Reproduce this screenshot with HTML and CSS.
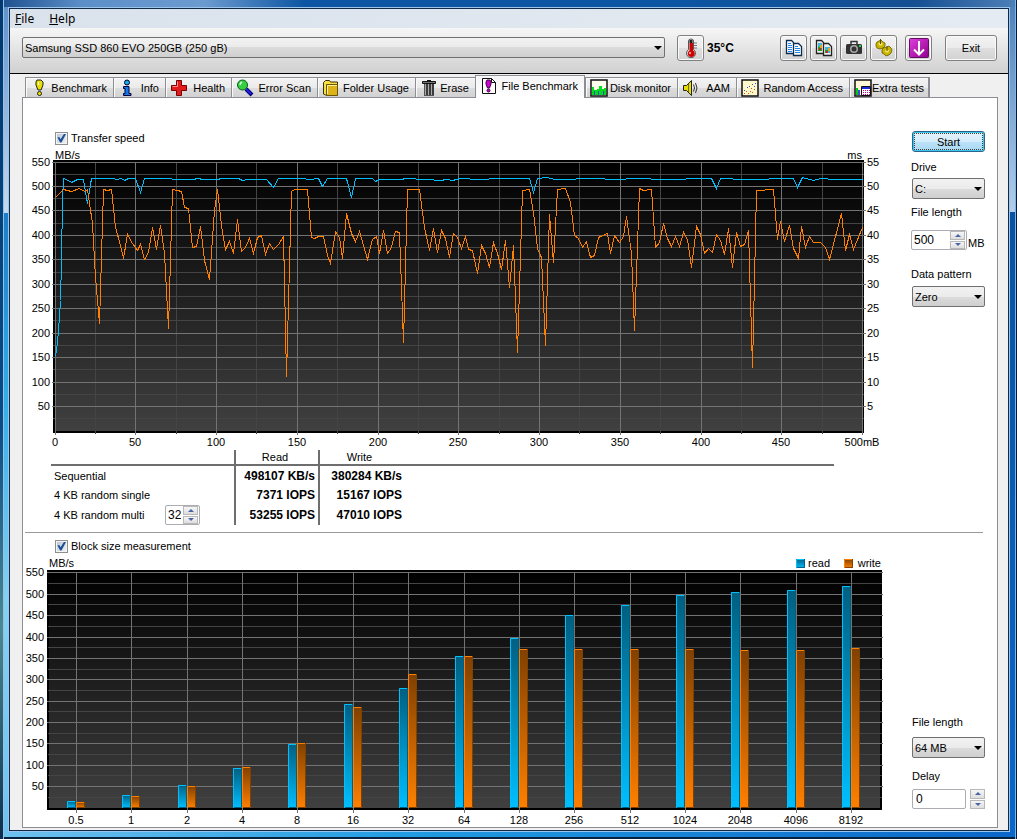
FILE: index.html
```html
<!DOCTYPE html>
<html lang="en">
<head>
<meta charset="utf-8">
<title>File Benchmark</title>
<link rel="stylesheet" href="styles.css">
</head>
<body>
<div class="desktop">
<div class="window">
  <nav class="menu">
    <button type="button"><u>F</u>ile</button>
    <button type="button"><u>H</u>elp</button>
  </nav>

  <header class="toolbar">
    <div class="combo combo-wide">
      <select aria-label="Disk"><option>Samsung SSD 860 EVO 250GB (250 gB)</option></select>
    </div>
    <button type="button" class="tool tool-temp" aria-label="Temperature">
      <svg viewBox="0 0 20 20"><path d="M7.500 3q0-2 2.500-2t2.500 2v8.500a4.500 4.500 0 1 1-5 0z" fill="#ddd" stroke="#555"/><path d="M8.500 5h3.500v7.500a3.500 3.500 0 1 1-3.500 0z" fill="#d40000"/><path d="M8.500 2h3v3h-3z" fill="#222"/><path d="M13 5h3M13 7.500h3M13 10h3" stroke="#777"/><circle cx="9" cy="15" r="1.200" fill="#ff9a9a"/></svg>
    </button>
    <output class="temp">35°C</output>
    <div class="tools">
      <button type="button" class="tool" aria-label="Copy text">
        <svg viewBox="0 0 20 20"><path d="M2.500 2.500h5l2 2v11h-7zM9.500 5.500h5l3 3v9h-8z" fill="#fff" stroke="#0d2b4c" stroke-width="1.300"/><path d="M4 5.500h3M4 7.500h4M4 9.500h4M4 11.500h4M4 13.500h4M11 8.500h3M11 10.500h5M11 12.500h5M11 14.500h5" stroke="#1d86e8"/></svg>
      </button>
      <button type="button" class="tool" aria-label="Copy picture">
        <svg viewBox="0 0 20 20"><path d="M2.500 2.500h5l2 2v11h-7zM9.500 5.500h5l3 3v9h-8z" fill="#eee" stroke="#222" stroke-width="1.300"/><path d="M4 5h4v4H4zM11 9h5v6h-5z" fill="#3db8d4"/><path d="M4 9h4v4H4zM11 12h3v3h-3z" fill="#2b9a35"/><path d="M6 7h2v3H6zM14 10h2v3h-2z" fill="#e8a020"/><path d="M5 10h2v2H5zM12 13h2v2h-2z" fill="#c32a1c"/></svg>
      </button>
      <button type="button" class="tool" aria-label="Save screenshot">
        <svg viewBox="0 0 20 20"><path d="M7 6V3.500h6V6" fill="none" stroke="#333" stroke-width="1.500"/><rect x="2" y="6" width="16" height="10" rx="1.500" fill="#333"/><circle cx="10" cy="11" r="4" fill="#aaa"/><circle cx="10" cy="11" r="2.500" fill="#333"/><path d="M15 7h2v2h-2z" fill="#24d63b"/></svg>
      </button>
      <button type="button" class="tool" aria-label="Options">
        <svg viewBox="0 0 20 20"><g fill="#c9b400" stroke="#665a00" stroke-width=".8"><path d="M2 6l1-2 2-1 2-1 2 2 2 1v3l-2 2-3 1-3-1-1-2z"/><path d="M8 12l1-2 4-1 2-1 2 2 1 2-1 3-2 2-3 1-2-2-2-1z"/></g><ellipse cx="6.500" cy="6" rx="2" ry="1.500" fill="#f0e870"/><ellipse cx="13" cy="13" rx="2" ry="1.500" fill="#f0e870"/><path d="M6.500 1v5M13 8v5" stroke="#554b00"/></svg>
      </button>
    </div>
    <button type="button" class="tool tool-down" aria-label="Minimize to tray">
      <svg viewBox="0 0 20 20"><defs><linearGradient id="violet" x2="1" y2="1"><stop stop-color="#e040e0"/><stop offset="1" stop-color="#90008c"/></linearGradient></defs><rect x=".5" y=".5" width="19" height="19" rx="1" fill="url(#violet)" stroke="#60105e"/><path d="M10 3v13M5 11.500l5 5 5-5" fill="none" stroke="#fff" stroke-width="2"/></svg>
    </button>
    <button type="button" class="exit">Exit</button>
  </header>

  <div class="tabs" role="tablist">
    <button type="button" role="tab"><svg viewBox="0 0 18 18"><path d="M7 1h4l2 2v3l-2 5H8L6 6V3z" fill="#e8e000" stroke="#222"/><path d="M8 3h1v3H8z" fill="#fff"/><circle cx="9.500" cy="14.500" r="2" fill="#e8e000" stroke="#222"/></svg>Benchmark</button>
    <button type="button" role="tab"><svg viewBox="0 0 18 18"><circle cx="9" cy="3.500" r="2.500" fill="#19a8e8" stroke="#003"/><path d="M5.500 7.500H11v7h2v2H5.500v-2H7v-5H5.500z" fill="#1277ea" stroke="#003"/></svg>Info</button>
    <button type="button" role="tab"><svg viewBox="0 0 18 18"><path d="M6.500 1.500h5v5h5v5h-5v5h-5v-5h-5v-5h5z" fill="#e21c1c" stroke="#700"/><path d="M7.500 2.500v5h-5" fill="none" stroke="#ff8c8c"/></svg>Health</button>
    <button type="button" role="tab"><svg viewBox="0 0 18 18"><path d="M10 10l6 6" stroke="#000078" stroke-width="4"/><path d="M10 10l5 5" stroke="#2222e0" stroke-width="2"/><circle cx="6.500" cy="6" r="5" fill="#35cf43" stroke="#075b10"/><path d="M4 6q0-2 2-3" stroke="#d5ffd5" stroke-width="1.500" fill="none"/></svg>Error Scan</button>
    <button type="button" role="tab"><svg viewBox="0 0 18 18"><path d="M1.500 3.500l2-2h4l1 1.500h7v13h-12l-2-1z" fill="#f4df45" stroke="#3b3000"/><path d="M4.500 5.500h11v11h-11z" fill="#dcb419" stroke="#6b5500"/><path d="M5.500 15V6.500H15" stroke="#fff19a" fill="none"/></svg>Folder Usage</button>
    <button type="button" role="tab"><svg viewBox="0 0 18 18"><path d="M4 4h10v13H4z" fill="#555"/><path d="M5.500 5v11M8.500 5v11M11.500 5v11" stroke="#aaa"/><path d="M7 5v11M10 5v11M13 5v11" stroke="#222"/><path d="M2.500 2.500h13v2h-13z" fill="#777" stroke="#111"/><path d="M7 1.500h4" stroke="#111"/></svg>Erase</button>
    <button type="button" role="tab" aria-selected="true"><svg viewBox="0 0 18 18"><path d="M2.500 1.500h9l4 4v11h-13z" fill="#fff" stroke="#111"/><path d="M11.500 1.500v4h4" fill="none" stroke="#111"/><path d="M7 3h3l1 2v2l-1.500 4h-2L6 7V5z" fill="#d000d0" stroke="#400040"/><circle cx="8.500" cy="13.500" r="1.500" fill="#d000d0" stroke="#400040"/></svg>File Benchmark</button>
    <button type="button" role="tab"><svg viewBox="0 0 18 18"><path d="M1 1h16v16H1z" fill="#fffff0" stroke="#111" stroke-width="1.500"/><path d="M2 8h2v3h3v-1h2V7h3v3h2v-1h2v7H2z" fill="#00df1a"/><path d="M4 12h1v4H4zM8 12h1v4H8zM13 12h1v4h-1z" fill="#3b47d8"/></svg>Disk monitor</button>
    <button type="button" role="tab"><svg viewBox="0 0 18 18"><path d="M1.500 6.500h3l5-5v15l-5-5h-3z" fill="#e6dc00" stroke="#222"/><path d="M6.500 5v8" stroke="#776d00"/><path d="M11.500 5.500q2 3.500 0 7M13.500 4q3 5 0 10" fill="none" stroke="#333"/></svg>AAM</button>
    <button type="button" role="tab"><svg viewBox="0 0 18 18"><path d="M1 1h16v16H1z" fill="#fff8cb" stroke="#111" stroke-width="1.500"/><g fill="#3b47d8"><path d="M3 11h1v1H3zM6 8h1v1H6zM8 7h1v1H8zM11 5h1v1h-1zM13 7h1v1h-1zM14 4h1v1h-1z"/></g><g fill="#e34b18"><path d="M3 14h1v1H3zM5 12h1v1H5zM7 14h1v1H7zM9 12h1v1H9zM11 13h1v1h-1zM13 10h1v1h-1zM10 9h1v1h-1z"/></g></svg>Random Access</button>
    <button type="button" role="tab"><svg viewBox="0 0 18 18"><path d="M1 1h16v16H1z" fill="#fff8d8" stroke="#111" stroke-width="1.500"/><path d="M2 9h2v7H2z" fill="#00c818"/><path d="M4 11h2v5H4z" fill="#3b47d8"/><path d="M7.500 7.500h9v9h-9z" fill="#fff" stroke="#111"/><path d="M8 8h8v2H8z" fill="#1a2ad8"/><path d="M9 11.500h7M9 13.500h7M9 15.500h7" stroke="#c800a0" stroke-dasharray="1 1"/></svg>Extra tests</button>
  </div>

  <main class="panel">
    <section class="part">
      <div class="part-main">
        <label class="check"><input type="checkbox" checked>Transfer speed</label>
        <svg id="speed" class="chart" viewBox="23 148 885 300" role="img" aria-label="Transfer speed"></svg>
        <table class="results">
          <colgroup><col class="col-name"><col class="col-value"><col class="col-value"><col></colgroup>
          <thead><tr><th></th><th scope="col">Read</th><th scope="col">Write</th><th></th></tr></thead>
          <tbody>
            <tr><th scope="row">Sequential</th><td>498107 KB/s</td><td>380284 KB/s</td><td></td></tr>
            <tr><th scope="row">4 KB random single</th><td>7371 IOPS</td><td>15167 IOPS</td><td></td></tr>
            <tr><th scope="row"><div class="multi"><label for="queue">4 KB random multi</label>
              <span class="spin spin-small"><input id="queue" type="text" value="32"><span class="arrows"><button type="button" aria-label="More"></button><button type="button" aria-label="Less"></button></span></span></div></th>
              <td>53255 IOPS</td><td>47010 IOPS</td><td></td></tr>
          </tbody>
        </table>
      </div>
      <aside class="side">
        <button type="button" class="start">Start</button>
        <label for="drive">Drive</label>
        <div class="combo"><select id="drive"><option>C:</option></select></div>
        <label for="length">File length</label>
        <div class="unit">
          <span class="spin"><input id="length" type="text" value="500"><span class="arrows"><button type="button" aria-label="More"></button><button type="button" aria-label="Less"></button></span></span>
          <span>MB</span>
        </div>
        <label for="pattern">Data pattern</label>
        <div class="combo"><select id="pattern"><option>Zero</option></select></div>
      </aside>
    </section>
    <hr>
    <section class="part part-block">
      <div class="part-main">
        <label class="check"><input type="checkbox" checked>Block size measurement</label>
        <svg id="blocks" class="chart" viewBox="23 554 885 273" role="img" aria-label="Block size measurement"></svg>
      </div>
      <aside class="side side-end">
        <label for="block-length">File length</label>
        <div class="combo"><select id="block-length"><option>64 MB</option></select></div>
        <label for="delay">Delay</label>
        <div class="delay">
          <input id="delay" type="text" value="0">
          <span class="arrows"><button type="button" aria-label="More"></button><button type="button" aria-label="Less"></button></span>
        </div>
      </aside>
    </section>
  </main>
</div>
</div>
<script src="charts.js"></script>
</body>
</html>
```
FILE: styles.css
```css
* { box-sizing: border-box; }

body {
  margin: 0;
  font: 11px/14px "Liberation Sans", Arial, sans-serif;
  color: #000;
}

button, input, select { font: inherit; color: inherit; margin: 0; }

.desktop {
  min-height: 100vh;
  display: flex;
  padding: 7px 7px 7px 8px;
  background:
    linear-gradient(#04386e, #0a4a86 50%, #4c8890 75%, #0c2f50) 0 0 / 3px 100% no-repeat,
    linear-gradient(#8fc4ea, #8fc4ea) 3px 0 / 1px 100% no-repeat,
    linear-gradient(#061a34, #061a34) 100% 0 / 1px 100% no-repeat,
    linear-gradient(#7ab8ec, #7ab8ec) calc(100% - 1px) 0 / 1px 100% no-repeat,
    linear-gradient(#06213c, #06213c) 0 100% / 100% 2px no-repeat,
    linear-gradient(90deg, #6fc2ee, #219be2 40%, #0a66c8) 0 100% / 100% 7px no-repeat,
    linear-gradient(90deg, #1c4f8c, #5c8fc8 8%, #6c9bd0 20%, #0c55a2 30%, #0c55a2 68%, #164f92 90%, #4d80b8) 0 0 / 100% 7px no-repeat,
    linear-gradient(#5c8fcb, #c4d9ee 213px, #1b7cc8 213px, #32aee6 400px, #86d0f2 600px, #6fc2ee) 0 0 / 50% 100% no-repeat,
    linear-gradient(#4d80b8, #b4cde8 212px, #0a52a0 212px, #0a66c8) 100% 0 / 50% 100% no-repeat;
}

.window {
  flex: 1;
  min-width: 0;
  display: flex;
  flex-direction: column;
  border: 2px solid #0e2b4c;
  background: #f0f0f0;
  outline: 1px solid #9cc4ea;
  outline-offset: -1px;
}

.menu {
  display: flex;
  height: 19px;
  padding: 0 5px;
  gap: 15px;
  background: linear-gradient(90deg, #dae2ec, #e4ebf2);
  font: 12px/20px "Noto Sans", "Open Sans", sans-serif;
}
.menu button { border: 0; padding: 0; background: none; }

.toolbar {
  display: flex;
  align-items: flex-start;
  height: 46px;
  padding: 7px 11px 0 12px;
  border-bottom: 1px solid #000;
  background: linear-gradient(#f6f6f6, #d0d0d0);
}

.combo { display: grid; align-items: center; height: 21px; }
.combo-wide { flex: 1; margin: 2px 12px 0 0; }
.combo select, .combo::after { grid-area: 1 / 1; }
.combo select {
  appearance: none;
  width: 100%;
  height: 21px;
  padding: 0 2px;
  border: 1px solid #707070;
  border-radius: 2px;
  background: linear-gradient(#f2f2f2, #ebebeb 50%, #dcdcdc 50%, #cfcfcf);
}
.combo::after {
  content: "";
  justify-self: end;
  margin-right: 3px;
  border: 4px solid transparent;
  border-top-color: #000;
  border-bottom: 0;
  pointer-events: none;
}

.tool, .exit {
  display: grid;
  place-items: center;
  width: 27px;
  height: 26px;
  padding: 0;
  border: 1px solid #808080;
  border-radius: 3px;
  background: linear-gradient(#f3f3f3, #ebebeb 50%, #dfdfdf 50%, #d2d2d2);
  box-shadow: inset 0 0 0 1px #fafafa;
}
.tool svg { width: 20px; height: 20px; }
.exit { width: 52px; }
.temp { width: 76px; padding: 0 3px; font-size: 12px; font-weight: bold; line-height: 27px; }
.tools { display: flex; gap: 3px; margin-right: 8px; }
.tool-down { margin-right: 13px; }

.tabs {
  display: grid;
  grid-template-columns: 88px 52px 66px 86px 98px 60px 110px 92px 59px 113px 81px;
  align-items: end;
  height: 24px;
  margin-bottom: -1px;
  padding-left: 15px;
  position: relative;
}
.tabs button {
  display: flex;
  align-items: center;
  justify-content: space-between;
  height: 21px;
  padding: 0 6px 0 4px;
  border: 1px solid #8c8e94;
  border-right-width: 0;
  background: linear-gradient(#f3f3f3, #ebebeb 50%, #dddddd 50%, #d2d2d2);
  box-shadow: inset 1px 1px #fafafa;
  white-space: nowrap;
}
.tabs button:last-child { border-right-width: 2px; padding-right: 4px; }
.tabs svg { flex: none; width: 18px; height: 18px; }
.tabs button[aria-selected] {
  height: 23px;
  border-right-width: 1px;
  border-bottom: 0;
  padding-bottom: 2px;
  background: linear-gradient(#f4f4f4, #fff);
}

.panel {
  flex: 1;
  display: flex;
  flex-direction: column;
  margin: 0 10px 2px 12px;
  border: 1px solid #8c8e94;
  background: #fff;
}
.panel hr { width: 100%; height: 1px; margin: 0; border: 0; border-left: 2px solid #fff; border-right: 14px solid #fff; background: #999; }

.part {
  display: grid;
  grid-template-columns: 1fr 74px;
  column-gap: 3px;
  padding: 33px 12px 7px 0;
}
.part-block { flex: 1; padding: 6px 12px 0 0; }
.part-main { min-width: 0; }

.check { display: flex; align-items: center; gap: 3px; height: 14px; margin-left: 32px; }
.check input {
  appearance: none;
  display: grid;
  place-items: center;
  width: 13px;
  height: 13px;
  border: 1px solid #8e8f8f;
  background: linear-gradient(135deg, #b8c2cc, #f4f6f8);
  box-shadow: inset 0 0 0 1px #f4f4f4;
}
.check input::before {
  content: "";
  width: 9px;
  height: 9px;
  background: #1c4f94;
  clip-path: polygon(5% 45%, 25% 40%, 40% 65%, 80% 0, 100% 5%, 50% 100%, 35% 100%);
}

.chart { display: block; width: 100%; height: auto; margin-top: 3px; font-size: 11px; }
.part-block .chart { margin-top: 0; }
.end { text-anchor: end; }
.mid { text-anchor: middle; }
.major { stroke: #737373; shape-rendering: crispEdges; }
.minor { stroke: #444; shape-rendering: crispEdges; }
.line-read, .line-write { fill: none; shape-rendering: crispEdges; }
.line-read { stroke: #00bfff; }
.line-write { stroke: #ff8000; }

.results {
  width: calc(100% - 102px);
  margin-left: 28px;
  margin-top: 2px;
  table-layout: fixed;
  border-collapse: collapse;
}
.col-name { width: 184px; }
.col-value { width: 84px; }
.results th, .results td { padding: 0 3px 0 0; font-weight: normal; text-align: right; white-space: nowrap; }
.results th { padding: 0 4px 0 0; text-align: center; }
.results tbody th { padding: 0 0 0 3px; text-align: left; }
.results thead tr { height: 15px; border-bottom: 2px solid #6e6e6e; }
.results tbody tr { height: 20px; }
.results td { font-size: 12px; font-weight: bold; }
.results tr > :nth-child(2), .results tr > :nth-child(3) { border-left: 2px solid #6e6e6e; }
.results tr > td:nth-child(3) { padding-right: 1px; }
.multi { display: flex; align-items: center; justify-content: space-between; padding-right: 34px; height: 20px; }

.spin { display: flex; width: 56px; height: 20px; padding-right: 1px; border: 1px solid #abadb3; border-radius: 2px; background: #fff; }
.spin-small { width: 35px; }
.spin input { flex: 1; width: 0; min-width: 0; padding: 0 2px; border: 0; background: none; font-size: 12px; }
.arrows { display: flex; flex-direction: column; width: 15px; gap: 1px; }
.arrows button { flex: 1; display: grid; place-items: center; min-height: 0; padding: 0; border: 1px solid #b8b8b8; background: linear-gradient(#f6f6f6, #dedede); }
.arrows button::before { content: ""; border: 3px solid transparent; border-top: 0; border-bottom-color: #4a62a8; }
.arrows button:last-child::before { border: 3px solid transparent; border-bottom: 0; border-top-color: #4a62a8; }

.side { display: flex; flex-direction: column; align-items: stretch; padding-left: 1px; }
.side > label, .unit { margin-left: -1px; }
.start {
  height: 21px;
  margin-bottom: 8px;
  padding: 0;
  border: 1px solid #2c628b;
  border-radius: 3px;
  background: linear-gradient(#e4f3fc, #d4ecfb 50%, #bce3f9 50%, #a8d8f3);
  box-shadow: inset 0 0 0 1px #38c8f0;
  outline: 1px dotted #4a3a30;
  outline-offset: -3px;
}
.side label { margin-bottom: 4px; }
.side .combo { margin-bottom: 6px; }
.unit { display: flex; align-items: flex-end; gap: 1px; margin-top: 7px; margin-bottom: 17px; }
.unit > span:last-child { line-height: 13px; }
.side label[for="pattern"] { margin-bottom: 5px; }
.side-end { justify-content: flex-end; padding-bottom: 18px; }
.side-end > label { margin-left: 0; }
.side-end label { margin-bottom: 8px; }
.side-end .combo { margin-bottom: 11px; }
.side-end label[for="delay"] { margin-bottom: 6px; }
.delay { display: flex; justify-content: space-between; gap: 4px; }
.delay input { flex: 1; width: 0; height: 20px; padding: 0 3px; border: 1px solid #abadb3; border-radius: 2px; font-size: 12px; }
```
FILE: charts.js
```js
const gradient = (id, from, to) =>
  `<linearGradient id="${id}" x2="0" y2="1"><stop stop-color="${from}"/><stop offset="1" stop-color="${to}"/></linearGradient>`;
const text = (x, y, label, cls = "") => `<text x="${x}" y="${y}" class="${cls}">${label}</text>`;
const hline = (x1, x2, y, cls) => `<path class="${cls}" d="M${x1} ${y + 0.5}H${x2}"/>`;
const vline = (x, y1, y2, cls) => `<path class="${cls}" d="M${x + 0.5} ${y1}V${y2}"/>`;

const read = "55,356 57,342 58,330 60,300 61,260 62,200 63,178 66,179 71,182 77,179 83,179 87,203 91,178 113,178 116,179 121,178 124,180 128,178 135,178 140,192 144,178 170,178 173,179 193,179 197,178 203,179 218,179 220,178 238,178 242,180 247,179 266,179 273,187 278,178 300,178 310,179 318,178 322,186 327,178 346,178 351,197 355,178 372,178 375,181 379,179 402,179 404,178 426,179 440,180 446,179 452,180 460,178 478,179 500,178 529,178 533,192 537,178 546,177 555,179 597,178 612,179 640,178 660,179 711,178 716,188 720,178 745,179 793,178 797,187 802,177 813,180 820,178 835,179 862,179";
const write = "55,197 63,189 71,191 79,188 84,191 87,189 88,196 92,223 95,277 99,323 103,189 107,190 111,189 115,227 120,245 123,258 127,234 132,243 137,250 140,244 144,259 148,252 152,227 156,249 160,225 164,253 168,328 172,189 177,190 181,191 184,207 188,208 192,247 196,246 200,226 204,260 209,279 214,210 217,189 221,225 225,249 229,241 233,253 237,219 241,251 245,247 249,238 253,253 257,237 261,235 265,254 269,243 273,249 278,244 283,236 286,376 291,191 294,189 307,189 311,237 314,238 318,236 323,236 327,255 330,263 335,231 339,237 342,258 346,213 351,233 355,241 359,231 367,259 372,239 376,236 379,253 383,230 387,253 391,247 395,231 399,232 403,342 407,189 419,189 424,227 429,250 433,228 437,252 441,230 445,238 449,257 453,233 457,237 461,248 465,236 468,249 472,250 477,273 481,245 485,253 489,267 493,242 497,253 501,269 505,240 509,287 513,245 517,352 522,190 529,189 533,212 537,248 541,257 545,345 549,214 553,262 557,189 565,188 570,202 574,235 578,238 582,247 586,241 590,257 594,255 598,237 607,233 610,253 614,235 619,242 623,236 626,216 631,253 634,330 639,188 643,190 651,189 655,247 659,242 663,223 667,238 671,246 675,236 679,246 683,232 687,239 691,267 696,226 700,234 704,253 708,248 712,252 716,234 720,240 724,254 728,228 732,267 736,232 740,246 744,244 748,230 752,367 756,190 773,189 777,239 780,221 784,241 789,225 793,248 798,258 801,226 805,247 809,236 813,242 820,242 825,247 829,259 841,213 845,250 849,234 853,249 862,227";

function drawSpeed() {
  const y = v => Math.floor(431 - v * 0.489);
  const x = v => Math.floor(55 + v * 1.615);
  let out = `<defs>${gradient("shade", "#000", "#404040")}</defs>
    <path d="M53 160H864V433H53z"/><path fill="url(#shade)" d="M55 162H863V431H55z"/>`;
  for (let v = 25; v < 550; v += 50) out += hline(53, 864, y(v), "minor");
  for (let v = 25; v < 500; v += 50) out += vline(x(v), 162, 434, "minor");
  for (let v = 50; v <= 550; v += 50) {
    out += hline(52, 866, y(v), "major") + text(50, y(v) + 4, v, "end") + text(867, y(v) + 4, v / 10);
  }
  for (let v = 0; v <= 500; v += 50) {
    out += vline(x(v), 162, 435, "major") + text(x(v), 446, v === 500 ? "500mB" : v, "mid");
  }
  out += text(55, 159, "MB/s") + text(862, 159, "ms", "end");
  out += `<g transform="translate(0.5 0.5)"><polyline class="line-read" points="${read}"/><polyline class="line-write" points="${write}"/></g>`;
  document.getElementById("speed").innerHTML = out;
}

function drawBlocks() {
  const sizes = ["0.5", 1, 2, 4, 8, 16, 32, 64, 128, 256, 512, 1024, 2048, 4096, 8192];
  const tops = [
    [802, 803], [796, 797], [786, 787], [769, 768], [745, 744], [705, 708], [689, 675], [657, 657],
    [639, 650], [616, 650], [606, 650], [596, 650], [593, 651], [591, 651], [587, 649]
  ];
  const y = v => Math.round(808.5 - v * 0.4275);
  let out = `<defs>${gradient("cyan", "#005f80", "#00bfff")}${gradient("amber", "#804000", "#ff8000")}</defs>
    <path d="M47 571H882V811H47z"/><path fill="url(#shade)" d="M49 573H880V809H49z"/>`;
  const bar = (left, top, width, bottom, fill, light, dark) =>
    `<path fill="${fill}" d="M${left} ${top}h${width}V${bottom}h-${width}z"/>
     <path fill="none" stroke="${dark}" d="M${left + width - 0.5} ${top}V${bottom - 0.5}H${left}"/>
     <path fill="none" stroke="${light}" d="M${left + 0.5} ${bottom}V${top + 0.5}H${left + width - 1}"/>`;
  const blue = ["url(#cyan)", "#00bfff", "#005f80"];
  const orange = ["url(#amber)", "#ff8000", "#804000"];
  for (let v = 25; v < 550; v += 50) out += hline(48, 882, y(v), "minor");
  for (let v = 50; v <= 550; v += 50) out += hline(47, 883, y(v), "major") + text(44, y(v) + 4, v, "end");
  sizes.forEach((size, i) => {
    const x = Math.round(76 + i * 55.36);
    out += vline(x, 573, 814, "major") + text(x, 825, size, "mid");
    out += bar(x - 9, tops[i][0], 9, 809, ...blue) + bar(x, tops[i][1], 9, 809, ...orange);
  });
  out += text(49, 568, "MB/s") + bar(796, 560, 9, 569, ...blue) + text(808, 568, "read");
  out += bar(844, 560, 9, 569, ...orange) + text(881, 568, "write", "end");
  document.getElementById("blocks").innerHTML = out;
}

drawSpeed();
drawBlocks();
```
